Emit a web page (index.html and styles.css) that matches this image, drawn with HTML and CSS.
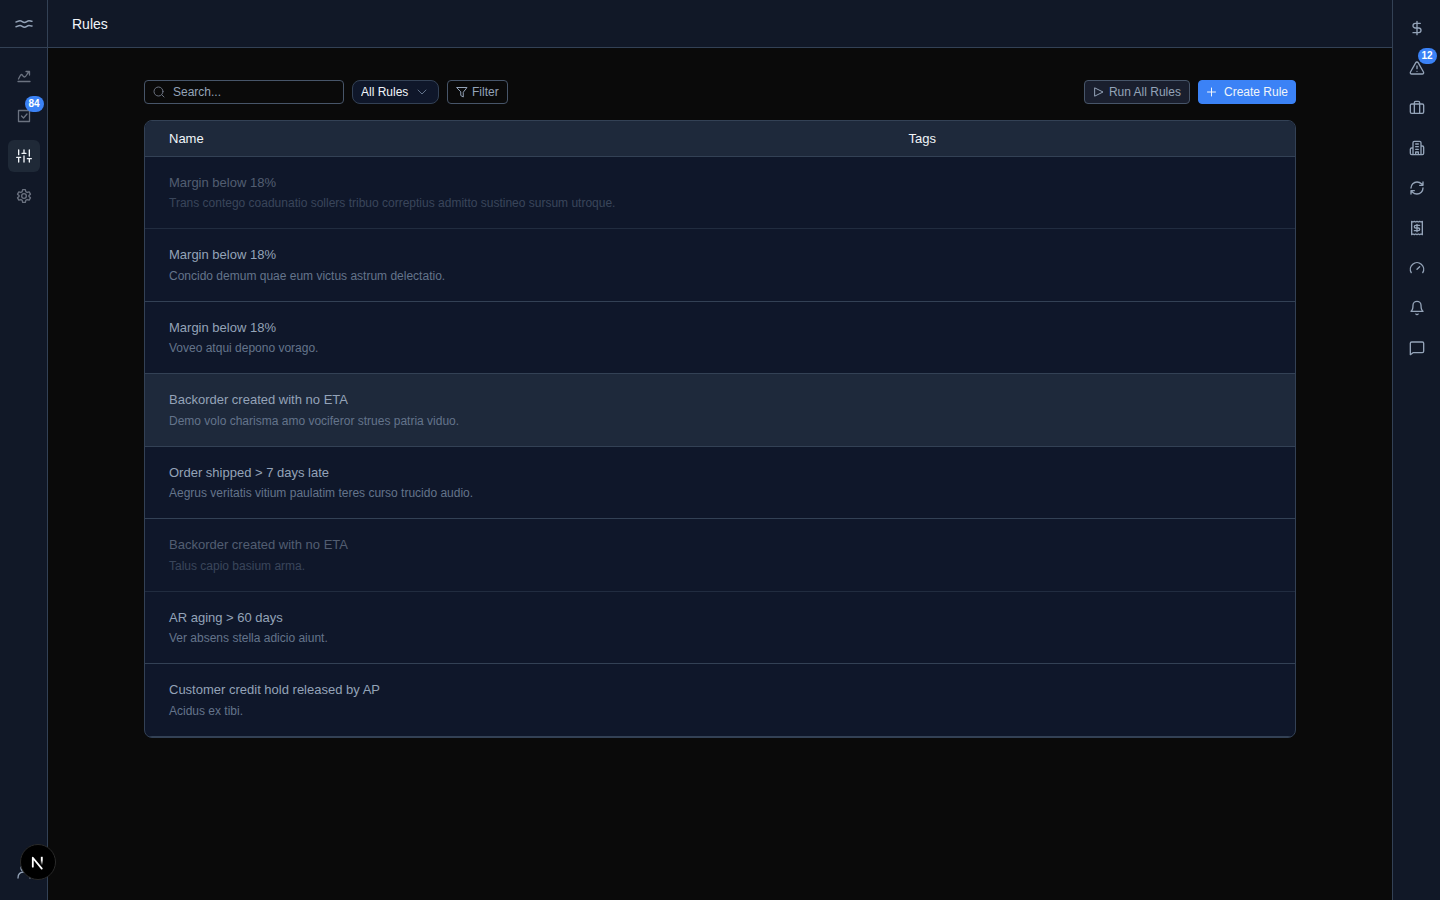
FILE: index.html
```
<!DOCTYPE html>
<html lang="en">
<head>
  <meta charset="utf-8">
  <title>Rules</title>
  <link rel="stylesheet" href="styles.css">
</head>
<body>
  <div class="app">
    <nav class="sidebar" aria-label="Main">
      <a class="logo" href="#" aria-label="Home">
        <svg class="icon-lg" viewBox="0 0 18 18"><path d="M1 7c1.500 0 2-1.300 4-1.300s2.500 1.800 4.500 1.800S12 5.700 14 5.700s1.500.600 3 .600M1 11.800c1.500 0 2-1.300 4-1.300s2.500 1.800 4.500 1.800 2.500-1.800 4.500-1.800 1.500.600 3 .600"/></svg>
      </a>
      <div class="nav">
        <a class="nav-item" href="#" aria-label="Insights">
          <svg viewBox="0 0 16 16"><path d="M2 13.500h12M2.500 11c1-2 2-4.500 3-4.500s1.500 2.500 3 2.500 2-2.500 4.500-5.500M10 3.500H13.500V7"/></svg>
        </a>
        <a class="nav-item" href="#" aria-label="Tasks">
          <svg viewBox="0 0 16 16"><path d="M2.500 2.500h11v11h-11zM5.500 8l2 2 3.500-4"/></svg>
          <span class="badge">84</span>
        </a>
        <a class="nav-item active" href="#" aria-label="Rules">
          <svg viewBox="0 0 24 24"><path d="M4 14v7M4 3v7M12 12v9M12 3v5M20 16v5M20 3v9M1 14h6M9 8h6M17 16h6"/></svg>
        </a>
        <a class="nav-item" href="#" aria-label="Settings">
          <svg viewBox="0 0 24 24"><circle cx="12" cy="12" r="3.500"/><path d="M10 2.500h4l.7 3 2 1.200 3-.9 2 3.400-2.300 2.100v1.400l2.300 2.100-2 3.400-3-.9-2 1.200-.7 3h-4l-.7-3-2-1.200-3 .9-2-3.400 2.300-2.100v-1.400L2.300 9.200l2-3.400 3 .9 2-1.200z"/></svg>
        </a>
      </div>
      <a class="nav-item account" href="#" aria-label="Account">
        <svg viewBox="0 0 16 16"><circle cx="8" cy="4" r="3"/><path d="M2 14c0-3 1.500-6 6-6s6 3 6 6"/></svg>
      </a>
    </nav>

    <div class="page">
      <header class="topbar">
        <h1>Rules</h1>
      </header>
      <main class="content">
        <div class="toolbar">
          <label class="search">
            <svg viewBox="0 0 24 24"><circle cx="11" cy="11" r="9"/><path d="M22 22l-4.500-4.500"/></svg>
            <input type="search" placeholder="Search..." aria-label="Search rules">
          </label>
          <div class="select">
            <select aria-label="Rule set">
              <option>All Rules</option>
            </select>
            <svg viewBox="0 0 24 24"><path d="M4 8l8 8 8-8"/></svg>
          </div>
          <button class="btn" type="button">
            <svg viewBox="0 0 24 24"><path d="M2 3h20l-7.500 9.500V22l-5-3v-6.500z"/></svg>
            Filter
          </button>
          <div class="actions">
            <button class="btn muted" type="button">
              <svg viewBox="0 0 24 24"><path d="M4 4l16 8-16 8z"/></svg>
              Run All Rules
            </button>
            <button class="btn primary" type="button">
              <svg viewBox="0 0 24 24"><path d="M11 4v16M3 12h16"/></svg>
              Create Rule
            </button>
          </div>
        </div>

        <div class="table-wrap">
          <table>
            <thead>
              <tr><th class="col-name">Name</th><th>Tags</th></tr>
            </thead>
            <tbody>
              <tr class="disabled">
                <td><div class="name">Margin below 18%</div><div class="desc">Trans contego coadunatio sollers tribuo correptius admitto sustineo sursum utroque.</div></td>
                <td></td>
              </tr>
              <tr>
                <td><div class="name">Margin below 18%</div><div class="desc">Concido demum quae eum victus astrum delectatio.</div></td>
                <td></td>
              </tr>
              <tr>
                <td><div class="name">Margin below 18%</div><div class="desc">Voveo atqui depono vorago.</div></td>
                <td></td>
              </tr>
              <tr class="selected">
                <td><div class="name">Backorder created with no ETA</div><div class="desc">Demo volo charisma amo vociferor strues patria viduo.</div></td>
                <td></td>
              </tr>
              <tr>
                <td><div class="name">Order shipped &gt; 7 days late</div><div class="desc">Aegrus veritatis vitium paulatim teres curso trucido audio.</div></td>
                <td></td>
              </tr>
              <tr class="disabled">
                <td><div class="name">Backorder created with no ETA</div><div class="desc">Talus capio basium arma.</div></td>
                <td></td>
              </tr>
              <tr>
                <td><div class="name">AR aging &gt; 60 days</div><div class="desc">Ver absens stella adicio aiunt.</div></td>
                <td></td>
              </tr>
              <tr>
                <td><div class="name">Customer credit hold released by AP</div><div class="desc">Acidus ex tibi.</div></td>
                <td></td>
              </tr>
            </tbody>
          </table>
        </div>
      </main>
    </div>

    <nav class="rail" aria-label="Tools">
      <a class="nav-item" href="#" aria-label="Pricing">
        <svg viewBox="0 0 24 24"><path d="M12 2v20M17 5H9.500a3.500 3.500 0 0 0 0 7h5a3.500 3.500 0 0 1 0 7H6"/></svg>
      </a>
      <a class="nav-item" href="#" aria-label="Alerts">
        <svg viewBox="0 0 24 24"><path d="M21.700 18l-8-14a2 2 0 0 0-3.500 0l-8 14A2 2 0 0 0 4 21h16a2 2 0 0 0 1.700-3M12 9v4M12 17h.01"/></svg>
        <span class="badge">12</span>
      </a>
      <a class="nav-item" href="#" aria-label="Jobs">
        <svg viewBox="0 0 24 24"><rect x="2" y="6" width="20" height="14" rx="2"/><path d="M16 20V4a2 2 0 0 0-2-2h-4a2 2 0 0 0-2 2v16"/></svg>
      </a>
      <a class="nav-item" href="#" aria-label="Vendors">
        <svg viewBox="0 0 24 24"><path d="M6 22V4a2 2 0 0 1 2-2h8a2 2 0 0 1 2 2v18zM6 12H4a2 2 0 0 0-2 2v6a2 2 0 0 0 2 2h2M18 9h2a2 2 0 0 1 2 2v9a2 2 0 0 1-2 2h-2M10 6h4M10 10h4M10 14h4M10 22v-4h4v4"/></svg>
      </a>
      <a class="nav-item" href="#" aria-label="Sync">
        <svg viewBox="0 0 24 24"><path d="M3 12a9 9 0 0 1 9-9 9.750 9.750 0 0 1 6.740 2.740L21 8M21 3v5h-5M21 12a9 9 0 0 1-9 9 9.750 9.750 0 0 1-6.740-2.740L3 16M8 16H3v5"/></svg>
      </a>
      <a class="nav-item" href="#" aria-label="Invoices">
        <svg viewBox="0 0 24 24"><path d="M4 2v20l2-1 2 1 2-1 2 1 2-1 2 1 2-1 2 1V2l-2 1-2-1-2 1-2-1-2 1-2-1-2 1zM16 8h-6a2 2 0 1 0 0 4h4a2 2 0 1 1 0 4H8M12 17.500v-11"/></svg>
      </a>
      <a class="nav-item" href="#" aria-label="Performance">
        <svg viewBox="0 0 24 24"><path d="M12 14l4-4M3.340 19a10 10 0 1 1 17.320 0"/></svg>
      </a>
      <a class="nav-item" href="#" aria-label="Notifications">
        <svg viewBox="0 0 24 24"><path d="M6 8a6 6 0 0 1 12 0c0 7 3 9 3 9H3s3-2 3-9M10.300 21a1.940 1.940 0 0 0 3.400 0"/></svg>
      </a>
      <a class="nav-item" href="#" aria-label="Messages">
        <svg viewBox="0 0 24 24"><path d="M20 3a2 2 0 0 1 2 2v12a2 2 0 0 1-2 2H6l-4 3V5a2 2 0 0 1 2-2z"/></svg>
      </a>
    </nav>
  </div>

  <button class="dev-button" type="button" aria-label="Open dev tools">
    <svg viewBox="0 0 36 36">
      <defs>
        <linearGradient id="fade" x1="0" y1="0" x2="0" y2="1">
          <stop offset="0.400" stop-color="#fff"/>
          <stop offset="1" stop-color="#fff" stop-opacity="0"/>
        </linearGradient>
      </defs>
      <path d="M12.500 23V13.500L22 25" stroke="#fff" stroke-width="1.900"/>
      <rect x="21" y="12.500" width="2" height="9" fill="url(#fade)" stroke="none"/>
    </svg>
  </button>
</body>
</html>
```
FILE: styles.css
```
* {
  box-sizing: border-box;
}
body {
  margin: 0;
  background: #0a0a0a;
  color: #f1f5f9;
  font-family: "Liberation Sans", Arial, sans-serif;
  font-size: 13px;
  line-height: 1.5;
}
svg {
  width: 16px;
  height: 16px;
  flex: none;
  fill: none;
  stroke: currentColor;
  stroke-width: 2;
  stroke-linecap: round;
  stroke-linejoin: round;
}
button, input, select {
  font: inherit;
  color: inherit;
}
.app {
  display: flex;
  min-height: 100vh;
}

/* side bars */
.sidebar, .rail {
  width: 48px;
  flex: none;
  display: flex;
  flex-direction: column;
  align-items: center;
  background: #111827;
  color: #94a3b8;
}
.sidebar {
  border-right: 1px solid #334155;
}
.rail {
  border-left: 1px solid #334155;
  padding-top: 12px;
  gap: 8px;
}
.logo {
  display: flex;
  align-items: center;
  justify-content: center;
  align-self: stretch;
  height: 48px;
  border-bottom: 1px solid #334155;
  color: #94a3b8;
}
.logo .icon-lg {
  width: 18px;
  height: 18px;
  stroke-width: 1.5;
}
.nav {
  display: flex;
  flex-direction: column;
  gap: 8px;
  padding-top: 12px;
}
.nav-item {
  position: relative;
  display: flex;
  align-items: center;
  justify-content: center;
  width: 32px;
  height: 32px;
  border-radius: 6px;
  color: inherit;
}
.sidebar .nav-item {
  color: #6b7280;
}
.nav-item svg[viewBox="0 0 16 16"] {
  stroke-width: 1.3;
}
.sidebar .nav-item.active {
  background: #1f2937;
  color: #f1f5f9;
}
.sidebar .account {
  margin-top: auto;
  margin-bottom: 12px;
  color: #94a3b8;
}
.badge {
  position: absolute;
  top: -4px;
  right: -4px;
  min-width: 19px;
  height: 16px;
  border-radius: 8px;
  background: #3b82f6;
  color: #fff;
  font-size: 10px;
  font-weight: 700;
  line-height: 16px;
  text-align: center;
}

/* page */
.page {
  flex: 1;
  min-width: 0;
}
.topbar {
  display: flex;
  align-items: center;
  height: 48px;
  padding: 0 24px;
  background: #111827;
  border-bottom: 1px solid #334155;
}
.topbar h1 {
  margin: 0;
  font-size: 14px;
  font-weight: 400;
  line-height: 20px;
}
.content {
  max-width: 1216px;
  margin: 0 auto;
  padding: 32px;
}
.toolbar {
  display: flex;
  gap: 8px;
  margin-bottom: 16px;
  font-size: 12px;
}
.toolbar svg {
  width: 12px;
  height: 12px;
}
.search {
  display: flex;
  align-items: center;
  gap: 8px;
  width: 200px;
  height: 24px;
  padding: 0 8px;
  border: 1px solid #475569;
  border-radius: 4px;
  color: #6b7280;
}
.search input {
  flex: 1;
  min-width: 0;
  padding: 0;
  border: 0;
  outline: 0;
  background: none;
  color: #f1f5f9;
}
.search input::placeholder {
  color: #94a3b8;
  opacity: 1;
}
.select {
  position: relative;
}
.select select {
  appearance: none;
  width: 87px;
  height: 24px;
  padding: 0 24px 0 8px;
  border: 1px solid #334155;
  border-radius: 8px;
  background: #0f172a;
}
.select svg {
  position: absolute;
  top: 6px;
  right: 11px;
  color: #64748b;
  pointer-events: none;
}
.btn {
  display: flex;
  align-items: center;
  gap: 4px;
  height: 24px;
  padding: 0 8px;
  border: 1px solid #475569;
  border-radius: 4px;
  background: none;
  color: #94a3b8;
}
.btn.muted {
  background: #1a1f2e;
}
.btn.primary {
  gap: 6px;
  padding: 0 7px;
  border-color: #3b82f6;
  background: #3b82f6;
  color: #f1f5f9;
}
.actions {
  display: flex;
  gap: 8px;
  margin-left: auto;
}

/* rules table */
.table-wrap {
  overflow: hidden;
  border: 1px solid #334155;
  border-radius: 8px;
  background: #0f172a;
}
table {
  width: 100%;
  border-collapse: separate;
  border-spacing: 0;
}
th {
  padding: 8px 24px 7px;
  border-bottom: 1px solid #334155;
  background: #1e293b;
  font-weight: 400;
  text-align: left;
}
.col-name {
  width: 64.3%;
}
td {
  padding: 16px 24px;
  border-bottom: 1px solid #334155;
}
.name {
  color: #94a3b8;
}
.desc {
  margin-top: 2px;
  color: #64748b;
  font-size: 12px;
}
.disabled {
  opacity: 0.5;
}
.selected {
  background: #1e293b;
}

.dev-button {
  position: fixed;
  left: 20px;
  bottom: 20px;
  width: 36px;
  height: 36px;
  padding: 0;
  border: 1px solid #2a2a2a;
  border-radius: 50%;
  background: #000;
}
.dev-button svg {
  display: block;
  width: 34px;
  height: 34px;
}
```
